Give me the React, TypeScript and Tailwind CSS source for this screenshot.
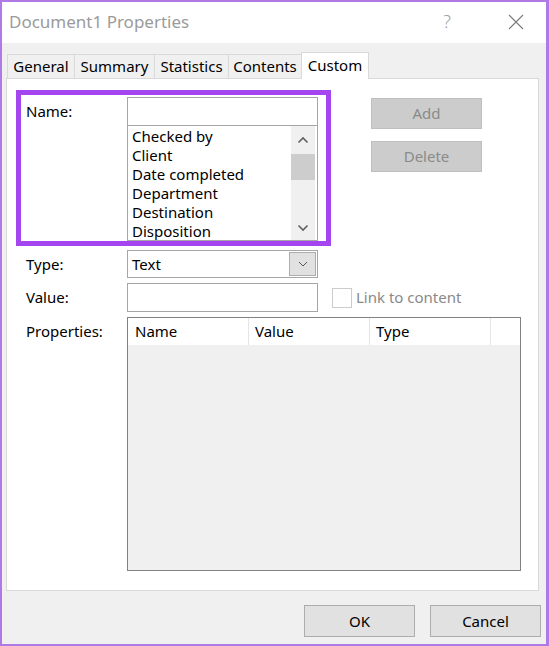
import React from "react";

const font = { fontFamily: '"Noto Sans", "Open Sans", sans-serif' };

function Chevron({ up }: { up?: boolean }) {
    return (
        <svg width="12" height="8" viewBox="0 0 12 8">
            <path
                d={up ? "M1.5 6.5 L6 2 L10.5 6.5" : "M1.5 1.5 L6 6 L10.5 1.5"}
                fill="none"
                stroke="#606060"
                strokeWidth="1.6"
            />
        </svg>
    );
}

function Tab({ label, active, w }: { label: string; active?: boolean; w: string }) {
    if (active) {
        return (
            <div className={`${w} h-[27px] bg-white border border-[#d9d9d9] border-b-0 -mb-px relative z-10 flex items-center justify-center text-[15px] text-black pb-[2px]`}>
                {label}
            </div>
        );
    }
    return (
        <div className={`${w} h-[24px] bg-[#f0f0f0] border border-[#d9d9d9] border-b-0 border-r-0 flex items-center justify-center text-[15px] text-black`}>
            {label}
        </div>
    );
}

const items = ["Checked by", "Client", "Date completed", "Department", "Destination", "Disposition"];

export default function App() {
    return (
        <div style={font} className="w-[549px] h-[646px] border-2 border-r-[3px] border-[#b07ae6] bg-[#f0f0f0] flex flex-col overflow-hidden">
            {/* title bar */}
            <div className="h-[41px] bg-white flex items-center pl-[7px] pr-[22px] pb-[2px] shrink-0">
                <span className="text-[17px] text-[#9b9b9b]">Document1 Properties</span>
                <span className="ml-auto text-[18px] text-[#a0a0a0] font-light mr-[57px]">?</span>
                <svg width="16" height="16" viewBox="0 0 16 16">
                    <path d="M1 1 L15 15 M15 1 L1 15" stroke="#7a7a7a" strokeWidth="1.1" />
                </svg>
            </div>

            <div className="pl-[4px] pt-[9px] flex flex-col">
                {/* tabs */}
                <div className="flex items-end h-[26px] pl-px">
                    <Tab label="General" w="w-[67px]" />
                    <Tab label="Summary" w="w-[80px]" />
                    <Tab label="Statistics" w="w-[74px]" />
                    <Tab label="Contents" w="w-[73px]" />
                    <Tab label="Custom" active w="w-[68px]" />
                </div>

                {/* panel */}
                <div className="w-[533px] h-[513px] bg-white border border-[#d9d9d9] flex flex-col text-[15px] text-black">
                    {/* name row */}
                    <div className="flex mt-[11px] ml-[9px]">
                        <div className="w-[315px] h-[156px] border-[5px] border-[#a545f0] flex">
                            <div className="w-[106px] pl-[5px] pt-[5px]">Name:</div>
                            <div className="w-[191px] flex flex-col pt-[2px]">
                                <div className="h-[29px] border border-[#a6a6a6] bg-white shrink-0" />
                                <div className="flex-1 border border-[#a6a6a6] border-t-0 flex overflow-hidden">
                                    <div className="flex-1 pl-[4px] pt-[1px] leading-[19px]">
                                        {items.map((t) => (
                                            <div key={t}>{t}</div>
                                        ))}
                                    </div>
                                    <div className="w-[24px] bg-[#f0f0f0] mr-[2px] flex flex-col items-center">
                                        <div className="h-[28px] flex items-center justify-center">
                                            <Chevron up />
                                        </div>
                                        <div className="w-full h-[26px] bg-[#cdcdcd]" />
                                        <div className="flex-1" />
                                        <div className="h-[20px] flex items-start justify-center pt-[4px]">
                                            <Chevron />
                                        </div>
                                    </div>
                                </div>
                            </div>
                        </div>
                        <div className="ml-[40px] pt-[8px] flex flex-col gap-[12px]">
                            <div className="w-[111px] h-[31px] bg-[#cccccc] border border-[#bfbfbf] flex items-center justify-center text-[#8a8a8a]">
                                Add
                            </div>
                            <div className="w-[111px] h-[31px] bg-[#cccccc] border border-[#bfbfbf] flex items-center justify-center text-[#8a8a8a]">
                                Delete
                            </div>
                        </div>
                    </div>

                    {/* type row */}
                    <div className="flex items-center mt-[4px] ml-[19px] h-[28px]">
                        <div className="w-[101px]">Type:</div>
                        <div className="w-[191px] h-[28px] border border-[#a6a6a6] flex items-center">
                            <span className="pl-[4px] flex-1">Text</span>
                            <div className="w-[27px] h-[24px] mr-px bg-[#e1e1e1] border border-[#adadad] flex items-center justify-center">
                                <svg width="10" height="6" viewBox="0 0 10 6">
                                    <path d="M1 1 L5 5 L9 1" fill="none" stroke="#555" strokeWidth="1" />
                                </svg>
                            </div>
                        </div>
                    </div>

                    {/* value row */}
                    <div className="flex items-center mt-[5px] ml-[19px] h-[29px]">
                        <div className="w-[101px]">Value:</div>
                        <div className="w-[191px] h-[29px] border border-[#a6a6a6]" />
                        <div className="ml-[14px] w-[20px] h-[20px] border border-[#cccccc]" />
                        <span className="ml-[4px] text-[#8a8a8a]">Link to content</span>
                    </div>

                    {/* properties row */}
                    <div className="flex mt-[5px] ml-[19px]">
                        <div className="w-[101px] pt-[3px]">Properties:</div>
                        <div className="w-[394px] h-[254px] border border-[#828282] bg-[#f0f0f0] flex flex-col">
                            <div className="h-[27px] bg-white flex items-center shrink-0">
                                <div className="w-[121px] h-full border-r border-[#e5e5e5] pl-[7px] flex items-center">Name</div>
                                <div className="w-[121px] h-full border-r border-[#e5e5e5] pl-[6px] flex items-center">Value</div>
                                <div className="w-[121px] h-full border-r border-[#e5e5e5] pl-[6px] flex items-center">Type</div>
                            </div>
                        </div>
                    </div>
                </div>

                {/* footer */}
                <div className="flex justify-end gap-[15px] pr-[5px] pt-[14px]">
                    <div className="w-[111px] h-[32px] bg-[#e1e1e1] border border-[#adadad] flex items-center justify-center text-[15px]">
                        OK
                    </div>
                    <div className="w-[111px] h-[32px] bg-[#e1e1e1] border border-[#adadad] flex items-center justify-center text-[15px]">
                        Cancel
                    </div>
                </div>
            </div>
        </div>
    );
}
